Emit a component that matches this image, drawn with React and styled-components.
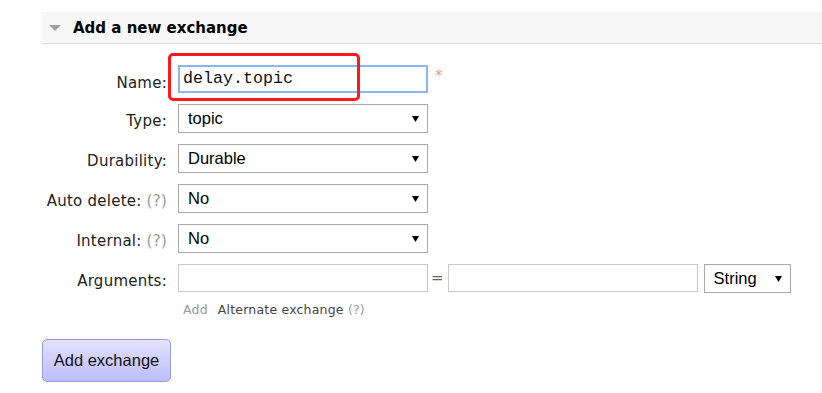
import React from "react";
import styled, { createGlobalStyle } from "styled-components";

const Global = createGlobalStyle`
  html, body { margin: 0; padding: 0; background: #fff; }
  body { font-family: "DejaVu Sans", Verdana, sans-serif; color: #222; }
`;

const Page = styled.div`
  position: relative;
  width: 822px;
  height: 393px;
  overflow: hidden;
  padding: 12px 0 0 42px;
  box-sizing: border-box;
`;

const Header = styled.div`
  height: 31px;
  background: #f7f7f7;
  border-bottom: 1px solid #dddddd;
  display: flex;
  align-items: center;
  gap: 12px;
  padding-left: 7px;
  margin-right: -1px;
`;

const Title = styled.h2`
  margin: 0;
  font-size: 15px;
  font-weight: bold;
  color: #000;
  line-height: 18px;
`;

const Form = styled.div`
  display: grid;
  grid-template-columns: 125px 1fr;
  column-gap: 11px;
  row-gap: 11px;
  margin-top: 21px;
  align-items: start;
`;

const Label = styled.label`
  text-align: right;
  font-size: 15px;
  letter-spacing: 0.25px;
  line-height: 18px;
  padding-top: ${(p) => p.$top || 8}px;
  color: #222;
  white-space: nowrap;
`;

const Help = styled.span`
  color: #999;
`;

const Controls = styled.div`
  display: flex;
  align-items: flex-start;
`;

const NameInput = styled.div`
  width: 250px;
  height: 28px;
  box-sizing: border-box;
  border: 2px solid #8db4f2;
  font-family: "Liberation Mono", "Courier New", monospace;
  font-size: 16.67px;
  line-height: 24px;
  padding-left: 3px;
  color: #111;
`;

const Required = styled.span`
  color: #f59a9a;
  font-size: 15px;
  margin-left: 7px;
  line-height: 18px;
  padding-top: 2px;
`;

const Select = styled.div`
  width: ${(p) => p.$w || 250}px;
  height: 29px;
  box-sizing: border-box;
  border: 1px solid #a9a9a9;
  display: flex;
  align-items: center;
  justify-content: space-between;
  padding: 0 8px 0 9px;
  font-family: "Liberation Sans", Arial, sans-serif;
  font-size: 16.5px;
  color: #000;
  background: #fff;
`;

const Arrow = () => (
  <svg width="7" height="6" viewBox="0 0 7 6">
    <polygon points="0,0 7,0 3.5,6" fill="#000" />
  </svg>
);

const TextInput = styled.div`
  width: 250px;
  height: 28px;
  box-sizing: border-box;
  border: 1px solid #c8c8c8;
  background: #fff;
`;

const Equals = styled.span`
  font-size: 15px;
  color: #666;
  line-height: 18px;
  padding: 5px 4px 0 3px;
`;

const Gap = styled.span`
  width: ${(p) => p.$w}px;
`;

const SubRow = styled.div`
  grid-column: 2;
  display: flex;
  gap: 10px;
  font-size: 12.5px;
  letter-spacing: 0.2px;
  line-height: 15px;
  margin-top: -2px;
  padding-left: 5px;
  color: #444;
`;

const Muted = styled.span`
  color: #999;
`;

const Button = styled.button`
  margin-top: 22px;
  width: 129px;
  height: 43px;
  box-sizing: border-box;
  border: 1px solid #9a9ae6;
  border-radius: 5px;
  background: linear-gradient(#e2e2ff, #bdbdfc);
  font-family: "Liberation Sans", Arial, sans-serif;
  font-size: 16.5px;
  color: #111;
  padding: 0;
`;

const Highlight = styled.div`
  position: absolute;
  left: 168px;
  top: 53px;
  width: 192px;
  height: 48px;
  box-sizing: border-box;
  border: 3.5px solid #ff1a1a;
  border-radius: 5px;
  pointer-events: none;
`;

const Caret = () => (
  <svg width="12" height="6" viewBox="0 0 12 6">
    <polygon points="0,0 12,0 6,6" fill="#a0a0a0" />
  </svg>
);

const SelectField = ({ value, w }) => (
  <Select $w={w}>
    <span>{value}</span>
    <Arrow />
  </Select>
);

export default function App() {
  return (
    <>
      <Global />
      <Page>
        <Header>
          <Caret />
          <Title>Add a new exchange</Title>
        </Header>
        <Form>
          <Label $top={9}>Name:</Label>
          <Controls>
            <NameInput>delay.topic</NameInput>
            <Required>*</Required>
          </Controls>

          <Label>Type:</Label>
          <Controls>
            <SelectField value="topic" />
          </Controls>

          <Label>Durability:</Label>
          <Controls>
            <SelectField value="Durable" />
          </Controls>

          <Label>
            Auto delete: <Help>(?)</Help>
          </Label>
          <Controls>
            <SelectField value="No" />
          </Controls>

          <Label>
            Internal: <Help>(?)</Help>
          </Label>
          <Controls>
            <SelectField value="No" />
          </Controls>

          <Label>Arguments:</Label>
          <Controls>
            <TextInput />
            <Equals>=</Equals>
            <TextInput />
            <Gap $w={6} />
            <SelectField value="String" w={87} />
          </Controls>

          <SubRow>
            <Muted>Add</Muted>
            <span>
              Alternate exchange <Muted>(?)</Muted>
            </span>
          </SubRow>
        </Form>
        <Button>Add exchange</Button>
        <Highlight />
      </Page>
    </>
  );
}
